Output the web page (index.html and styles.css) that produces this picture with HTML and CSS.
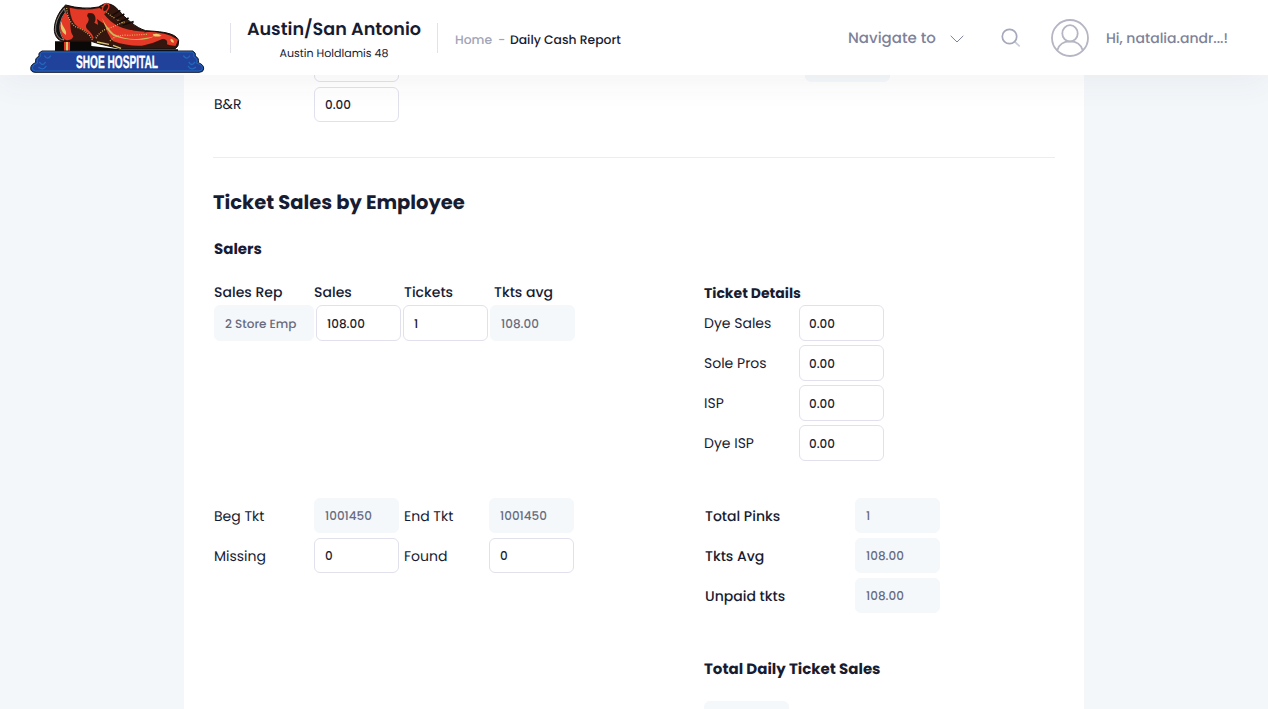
FILE: index.html
```html
<!DOCTYPE html>
<html lang="en">
<head>
<meta charset="utf-8">
<title>Daily Cash Report</title>
<link rel="stylesheet" href="styles.css">
</head>
<body>
<header class="header">
  <svg class="logo" viewBox="30 0 525 225" role="img" aria-label="Shoe Hospital">
    <path d="M105 124H214V138L300 148H474V154H105Z" fill="#0b0908"/>
    <path d="M132 124H150V153H132Z" fill="#df3626"/><path d="M138 124H144V153H138Z" fill="#d7c66e"/>
    <path d="M137 15C122 28 103 57 103 88C103 107 113 121 128 124H214L239 132L300 146H466Q477 139 476 122C471 104 441 97 405 94L377 92C347 83 321 59 294 29Q275 7 252 12L235 21Q190 30 137 15Z" fill="#35160e" stroke="#100a08" stroke-width="3"/>
    <path d="M133 25Q103 61 107 94Q113 118 132 120Q115 96 121 69Q125 50 136 37Z" fill="#111" stroke="#b8b8b6" stroke-width="2"/>
    <path d="M136 36C116 66 116 108 138 120Q155 123 160 109Q151 97 151 74Q151 56 136 36Z" fill="#e33926"/>
    <path d="M149 23Q192 34 239 24L257 38Q276 64 315 82Q337 95 375 95L368 103Q330 110 292 92Q255 75 231 57Q240 92 227 111L218 116Q211 98 174 81Q151 65 149 23Z" fill="#e33926"/>
    <path d="M204 40Q220 36 225 48Q229 60 223 68Q235 73 249 87L230 104L222 116Q217 100 201 87Q194 77 203 68Q210 57 201 48Z" fill="#35160e"/>
    <path d="M260 38Q285 67 320 73Q337 86 374 91Q331 95 292 77Q268 64 252 42Z" fill="#35160e"/>
    <path d="M246 52Q276 84 309 94Q344 105 382 96Q413 94 452 107L474 119L467 137Q451 138 441 133Q445 117 427 117Q397 132 366 137Q323 139 280 124Q264 111 246 52Z" fill="#e33926"/>
    <path d="M246 54Q259 81 281 101Q317 120 360 116Q391 113 405 108Q384 120 350 120Q309 119 281 108Q257 91 246 54Z" fill="#c9b85c"/>
    <path d="M124 64Q117 92 137 105Q141 97 134 86Q126 77 124 64Z" fill="#e2c968"/>
    <path d="M398 103Q414 98 425 107Q412 112 401 108ZM453 116Q463 119 461 128Q454 129 451 120Z" fill="#edcf6d"/>
    <g fill="none" stroke="#d8bd68" stroke-width="3.5" stroke-dasharray="3 4">
      <path d="M140 24Q143 65 168 81Q203 93 217 119"/><path d="M228 115Q243 89 270 84L314 65"/><path d="M270 123Q287 103 325 106L382 103"/><path d="M246 19Q261 46 313 70"/>
    </g>
    <g fill="none" stroke="#140c0a" stroke-width="5"><path d="M276 47L301 31M285 58L313 42M296 67L326 54M308 75L341 65"/></g>
    <ellipse cx="257" cy="23" rx="8" ry="13" transform="rotate(28 257 23)" fill="#35160e" stroke="#e33926" stroke-width="4"/>
    <path d="M231 126L267 133M279 136L303 145" stroke="#d7c66e" stroke-width="4"/>
    <path d="M66 153H518Q529 158 526 169Q538 173 535 188Q552 194 551 207Q550 217 537 217H45Q32 216 32 205Q33 192 47 188Q44 174 57 169Q53 158 66 153Z" fill="#20429b" stroke="#101a31" stroke-width="3"/>
    <path d="M68 156H516Q526 160 521 170Q534 175 530 190Q547 193 547 206Q546 213 536 213H46Q36 211 37 203Q40 191 52 190Q49 175 61 170Q58 158 68 156Z" fill="none" stroke="#2268bd" stroke-width="3"/>
    <path d="M74 168Q82 181 92 168M59 187Q68 200 76 187M56 202Q68 213 78 199M509 168Q501 181 491 168M524 187Q515 200 507 187M527 202Q515 213 505 199" fill="none" stroke="#2268bd" stroke-width="4" stroke-linecap="round"/>
    <text class="logo-text" x="168" y="205" textLength="246" lengthAdjust="spacingAndGlyphs">SHOE HOSPITAL</text>
  </svg>
  <div class="store">
    <div class="store-area">Austin/San Antonio</div>
    <div class="store-name">Austin Holdlamis 48</div>
  </div>
  <nav class="crumbs"><span class="crumb-home">Home</span><span class="crumb-dash">-</span><span>Daily Cash Report</span></nav>
  <div class="tools">
    <span class="navigate">Navigate to</span>
    <svg class="chevron" viewBox="0 0 14 8"><path d="M.7.8L7 7L13.3.8"/></svg>
    <svg class="search" viewBox="0 0 20 20"><circle cx="8.5" cy="8.5" r="7.2"/><path d="M13.7 13.7L18.7 18.3" opacity=".6"/></svg>
    <svg class="avatar" viewBox="0 0 38 38"><circle cx="19" cy="19" r="18"/><ellipse cx="19" cy="14.4" rx="7.7" ry="8.2"/><path d="M6.3 31.3C8 25.6 13 22.4 19 22.4S30 25.6 31.7 31.3"/></svg>
    <span class="hello">Hi, natalia.andr...!</span>
  </div>
</header>
<main class="page">
  <form class="panel">
    <div class="top-row"><span></span><input class="field" value=""><span></span><input class="field readonly" value="" readonly></div>
    <div class="top-row"><label class="label top-label">B&amp;R</label><input class="field" value="0.00"></div>
    <hr class="rule">
    <h2 class="title">Ticket Sales by Employee</h2>
    <h3 class="subtitle">Salers</h3>
    <div class="columns employees">
      <section>
        <div class="sales-head"><span>Sales Rep</span><span>Sales</span><span>Tickets</span><span>Tkts avg</span></div>
        <div class="sales-row">
          <input class="field readonly rep" value="2 Store Emp" readonly><input class="field" value="108.00"><input class="field" value="1"><input class="field readonly" value="108.00" readonly>
        </div>
      </section>
      <section>
        <h4 class="details-title">Ticket Details</h4>
        <div class="details">
          <label class="label">Dye Sales</label><input class="field" value="0.00">
          <label class="label">Sole Pros</label><input class="field" value="0.00">
          <label class="label">ISP</label><input class="field" value="0.00">
          <label class="label">Dye ISP</label><input class="field" value="0.00">
        </div>
      </section>
    </div>
    <div class="columns totals">
      <section class="ticket-range">
        <label class="label">Beg Tkt</label><input class="field readonly" value="1001450" readonly>
        <label class="label">End Tkt</label><input class="field readonly" value="1001450" readonly>
        <label class="label">Missing</label><input class="field" value="0">
        <label class="label">Found</label><input class="field" value="0">
      </section>
      <section class="summary">
        <label class="label medium">Total Pinks</label><input class="field readonly" value="1" readonly>
        <label class="label medium">Tkts Avg</label><input class="field readonly" value="108.00" readonly>
        <label class="label medium">Unpaid tkts</label><input class="field readonly" value="108.00" readonly>
      </section>
    </div>
    <div class="columns">
      <span></span>
      <section>
        <h3 class="daily-title">Total Daily Ticket Sales</h3>
        <input class="field readonly" value="" readonly>
      </section>
    </div>
  </form>
</main>
</body>
</html>
```
FILE: styles.css
```css
* { box-sizing: border-box; }
body { margin: 0; height: 709px; overflow: hidden; background: #f3f7fa; color: #181c32; font-family: Poppins, Inter, "Open Sans", sans-serif; text-rendering: geometricPrecision; }
.header { position: relative; z-index: 1; display: flex; height: 75px; padding-left: 30px; background: #fff; box-shadow: 0 10px 30px rgba(82, 63, 80, .05); }
.logo { width: 175px; height: 75px; flex: none; overflow: visible; }
.logo-text { fill: #fff; font: bold 54px "Liberation Sans Narrow", "Liberation Sans", sans-serif; stroke: #fff; stroke-width: 1px; }
.store { width: 208px; height: 30px; margin: 23px 0 0 25px; border-left: 1px solid #e1e2ec; border-right: 1px solid #e1e2ec; text-align: center; white-space: nowrap; }
.store-area { margin-top: -6px; font-size: 17.6px; line-height: 26px; font-weight: 600; }
.store-name { margin-top: -1px; font-size: 11.05px; line-height: 22px; }
.crumbs { display: flex; align-items: center; height: 30px; margin: 26px 0 0 17px; font-size: 12.35px; font-weight: 500; white-space: nowrap; }
.crumb-home { width: 43px; color: #a1a5b7; }
.crumb-dash { width: 12px; color: #a1a5b7; }
.tools { display: flex; align-items: center; height: 76px; margin-left: auto; padding-right: 40px; color: #7e8299; font-size: 15px; font-weight: 500; white-space: nowrap; }
.tools svg { flex: none; fill: none; stroke: #a5a8bb; }
.navigate { width: 102px; }
.tools .chevron { width: 14px; height: 8px; margin-top: 2px; stroke: #7e8299; }
.tools .search { width: 20px; height: 20px; margin-left: 37px; stroke-width: 1.7; }
.tools .avatar { width: 38px; height: 38px; margin-left: 30px; stroke: #b5b5c3; stroke-width: 1.8; }
.hello { width: 122px; margin-left: 17px; font-size: 14px; }
.page { height: 634px; overflow: hidden; }
.panel { width: 900px; height: 700px; margin: -28px auto 0; padding: 0 30px; background: #fff; }
.top-row { display: grid; grid-template-columns: 100px 85px 406px 85px; align-items: center; height: 35px; margin-bottom: 5px; }
.field { display: block; width: 85px; height: 35px; margin: 0; padding: 2px 10px 0; border: 1px solid #e1e1ee; border-radius: 6px; outline: 0; background: #fff; color: #181c32; font: 500 12px Poppins, Inter, "Open Sans", sans-serif; text-rendering: inherit; }
.readonly { border-color: #f4f8fb; background: #f4f8fb; color: #686b80; }
.label { font-size: 14px; line-height: 20px; white-space: nowrap; }
.top-label { margin-top: -2px; }
.medium { padding-left: 1px; font-weight: 500; }
.rule { width: 842px; height: 1px; margin: 35px 0 0 -1px; border: 0; background: #ededf1; }
.title { margin: 30px 0 0 -1px; font-size: 19.5px; line-height: 30px; font-weight: 700; }
.subtitle { margin: 20px 0 0; font-size: 15px; line-height: 24px; font-weight: 700; }
.columns { display: grid; grid-template-columns: 490px 350px; }
.employees { height: 180px; margin-top: 19px; }
.sales-head { display: grid; grid-template-columns: 100px 90px 90px 90px; height: 24px; padding-top: 1px; font-size: 14px; line-height: 20px; font-weight: 500; }
.sales-row { display: flex; gap: 2px; }
.sales-row .field, .details .field { height: 36px; padding-top: 3px; }
.sales-row .rep { width: 100px; }
.details-title { height: 24px; margin: 0; padding-top: 2px; font-size: 14px; line-height: 20px; font-weight: 700; }
.details { display: grid; grid-template-columns: 95px 85px; row-gap: 4px; align-items: center; }
.details .field { padding-left: 9px; }
.totals { height: 115px; margin-top: 37px; align-items: start; }
.ticket-range { display: grid; grid-template-columns: 100px 90px 85px 85px; row-gap: 5px; align-items: center; }
.summary { display: grid; grid-template-columns: 151px 85px; row-gap: 5px; align-items: center; }
.daily-title { margin: 45px 0 19px; font-size: 15px; line-height: 24px; font-weight: 700; }
```
